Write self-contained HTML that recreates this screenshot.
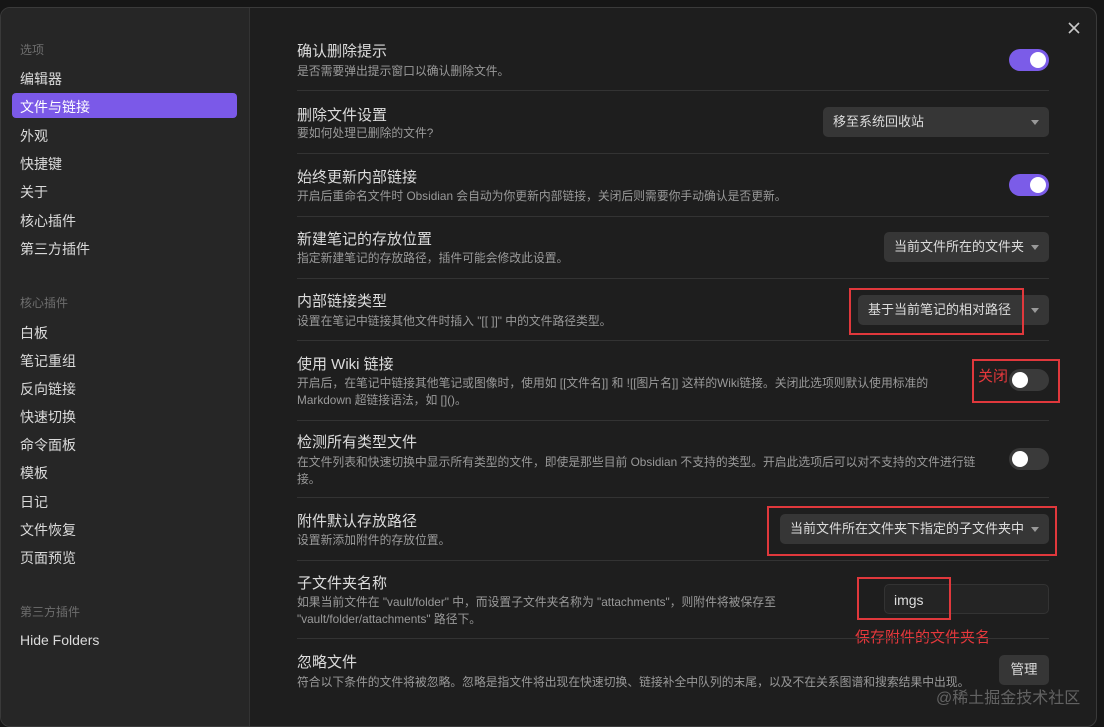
<!DOCTYPE html><html><head><meta charset="utf-8"><style>
*{margin:0;padding:0;box-sizing:border-box}
body{width:1104px;height:712px;background:#161616;overflow:hidden;position:relative;font-family:"Liberation Sans","Noto Sans CJK SC",sans-serif;color:#dadada}
.modal{position:absolute;left:0;top:7px;width:1097px;height:720px;background:#1e1e1e;border:1px solid #3a3a3a;border-radius:10px;overflow:hidden}
.side{position:absolute;left:0;top:0;width:249px;height:100%;background:#262626;border-right:1px solid #333}
.a{position:absolute;font-size:14px;white-space:nowrap}
.sh{color:#6e6e6e;font-size:12px}
.sel{position:absolute;left:11px;top:85px;width:225px;height:25px;background:#7b59e8;border-radius:4px}
.t{position:absolute;left:297px;font-size:15px;color:#dcdcdc;white-space:nowrap}
.d{position:absolute;left:297px;font-size:11.8px;color:#9a9a9a;line-height:17px;white-space:nowrap}
.hr{position:absolute;left:297px;width:752px;height:1px;background:#333}
.tg{position:absolute;width:40px;height:22px;border-radius:11px;background:#3a3a3a}
.tg.on{background:#7b5ce8}
.tg i{position:absolute;top:3px;width:16px;height:16px;border-radius:50%;background:#fff;left:3px}
.tg.on i{left:21px}
.dd{position:absolute;height:30px;background:#363636;border-radius:5px;font-size:13px;color:#dcdcdc;padding-left:10px;line-height:30px;white-space:nowrap}
.dd:after{content:"";position:absolute;right:10px;top:13px;border:4px solid transparent;border-top:5px solid #999}
.box{position:absolute;border:2px solid #e0383c}
.red{position:absolute;color:#e5383c;font-size:15px;white-space:nowrap}
</style></head><body>
<div class="modal">
<div class="side">
<div class="a sh" style="left:19px;top:33px">选项</div>
<div class="a" style="left:19px;top:61px">编辑器</div>
<div class="sel"></div>
<div class="a" style="left:19px;top:89px;color:#fff">文件与链接</div>
<div class="a" style="left:19px;top:118px">外观</div>
<div class="a" style="left:19px;top:146px">快捷键</div>
<div class="a" style="left:19px;top:174px">关于</div>
<div class="a" style="left:19px;top:203px">核心插件</div>
<div class="a" style="left:19px;top:231px">第三方插件</div>
<div class="a sh" style="left:19px;top:286px">核心插件</div>
<div class="a" style="left:19px;top:315px">白板</div>
<div class="a" style="left:19px;top:343px">笔记重组</div>
<div class="a" style="left:19px;top:371px">反向链接</div>
<div class="a" style="left:19px;top:399px">快速切换</div>
<div class="a" style="left:19px;top:427px">命令面板</div>
<div class="a" style="left:19px;top:455px">模板</div>
<div class="a" style="left:19px;top:484px">日记</div>
<div class="a" style="left:19px;top:512px">文件恢复</div>
<div class="a" style="left:19px;top:540px">页面预览</div>
<div class="a sh" style="left:19px;top:595px">第三方插件</div>
<div class="a" style="left:19px;top:624px">Hide Folders</div>
</div>
<svg style="position:absolute;left:1066px;top:13px" width="14" height="14" viewBox="0 0 14 14"><path d="M2 2L12 12M12 2L2 12" stroke="#c8c8c8" stroke-width="1.6"/></svg>
</div>
<div class="t" style="top:40px">确认删除提示</div>
<div class="d" style="top:63px">是否需要弹出提示窗口以确认删除文件。</div>
<div class="tg on" style="left:1009px;top:49px"><i></i></div>
<div class="hr" style="top:90px"></div>
<div class="t" style="top:104px">删除文件设置</div>
<div class="d" style="top:125px">要如何处理已删除的文件?</div>
<div class="dd" style="left:823px;top:107px;width:226px">移至系统回收站</div>
<div class="hr" style="top:153px"></div>
<div class="t" style="top:166px">始终更新内部链接</div>
<div class="d" style="top:188px">开启后重命名文件时 Obsidian 会自动为你更新内部链接，关闭后则需要你手动确认是否更新。</div>
<div class="tg on" style="left:1009px;top:174px"><i></i></div>
<div class="hr" style="top:216px"></div>
<div class="t" style="top:228px">新建笔记的存放位置</div>
<div class="d" style="top:250px">指定新建笔记的存放路径，插件可能会修改此设置。</div>
<div class="dd" style="left:884px;top:232px;width:165px">当前文件所在的文件夹</div>
<div class="hr" style="top:278px"></div>
<div class="t" style="top:290px">内部链接类型</div>
<div class="d" style="top:313px">设置在笔记中链接其他文件时插入 "[[ ]]" 中的文件路径类型。</div>
<div class="dd" style="left:858px;top:295px;width:191px">基于当前笔记的相对路径</div>
<div class="box" style="left:849px;top:288px;width:175px;height:47px"></div>
<div class="hr" style="top:340px"></div>
<div class="t" style="top:353px">使用 Wiki 链接</div>
<div class="d" style="top:375px">开启后，在笔记中链接其他笔记或图像时，使用如 [[文件名]] 和 ![[图片名]] 这样的Wiki链接。关闭此选项则默认使用标准的<br>Markdown 超链接语法，如 []()。</div>
<div class="tg" style="left:1009px;top:369px"><i></i></div>
<div class="red" style="left:978px;top:365px">关闭</div>
<div class="box" style="left:972px;top:359px;width:88px;height:44px"></div>
<div class="hr" style="top:420px"></div>
<div class="t" style="top:431px">检测所有类型文件</div>
<div class="d" style="top:454px">在文件列表和快速切换中显示所有类型的文件，即使是那些目前 Obsidian 不支持的类型。开启此选项后可以对不支持的文件进行链<br>接。</div>
<div class="tg" style="left:1009px;top:448px"><i></i></div>
<div class="hr" style="top:497px"></div>
<div class="t" style="top:510px">附件默认存放路径</div>
<div class="d" style="top:532px">设置新添加附件的存放位置。</div>
<div class="dd" style="left:780px;top:514px;width:269px">当前文件所在文件夹下指定的子文件夹中</div>
<div class="box" style="left:767px;top:506px;width:290px;height:50px"></div>
<div class="hr" style="top:560px"></div>
<div class="t" style="top:572px">子文件夹名称</div>
<div class="d" style="top:594px">如果当前文件在 "vault/folder" 中，而设置子文件夹名称为 "attachments"，则附件将被保存至<br>"vault/folder/attachments" 路径下。</div>
<div style="position:absolute;left:884px;top:584px;width:165px;height:30px;background:#242424;border:1px solid #333;border-radius:5px;font-size:14px;color:#ddd;padding:7px 0 0 9px">imgs</div>
<div class="box" style="left:857px;top:577px;width:94px;height:43px"></div>
<div class="red" style="left:855px;top:626px">保存附件的文件夹名</div>
<div class="hr" style="top:638px"></div>
<div class="t" style="top:651px">忽略文件</div>
<div class="d" style="top:674px">符合以下条件的文件将被忽略。忽略是指文件将出现在快速切换、链接补全中队列的末尾，以及不在关系图谱和搜索结果中出现。</div>
<div style="position:absolute;left:999px;top:655px;width:50px;height:30px;background:#363636;border-radius:5px;font-size:13.5px;color:#ddd;text-align:center;line-height:30px">管理</div>
<div class="a" style="left:936px;top:684px;font-size:16px;color:rgba(200,200,200,0.4)">@稀土掘金技术社区</div>
</body></html>
